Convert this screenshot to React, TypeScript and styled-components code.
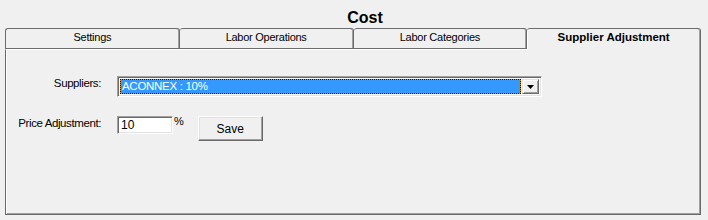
import React from 'react';
import styled, { createGlobalStyle } from 'styled-components';

const tabs = ['Settings', 'Labor Operations', 'Labor Categories', 'Supplier Adjustment'];
const activeTab = 'Supplier Adjustment';

const App = () => {
  return (
    <>
      <GlobalStyle />
      <Window>
        <Title>Cost</Title>
        <TabStrip>
          {tabs.map(tab => (
            <Tab key={tab} $active={tab === activeTab}>
              {tab}
            </Tab>
          ))}
        </TabStrip>
        <Panel>
          <Form>
            <Label>Suppliers:</Label>
            <Combo>
              <ComboField>ACONNEX : 10%</ComboField>
              <DropButton>
                <svg width="7" height="4" viewBox="0 0 7 4">
                  <path d="M0 0h7L3.5 4z" fill="#000" />
                </svg>
              </DropButton>
            </Combo>
            <Label>Price Adjustment:</Label>
            <PriceRow>
              <PriceInput defaultValue="10" />
              <Percent>%</Percent>
              <Button>Save</Button>
            </PriceRow>
          </Form>
        </Panel>
      </Window>
    </>
  );
};

const GlobalStyle = createGlobalStyle`
  html, body {
    margin: 0;
    padding: 0;
    background: #f0f0f0;
  }
  body {
    font-family: "Liberation Sans", Arial, sans-serif;
    color: #000;
  }
`;

const Window = styled.div`
  width: 708px;
  height: 220px;
  box-sizing: border-box;
  padding: 0 7px 0 5px;
  background: #f0f0f0;
  overflow: hidden;
`;

const Title = styled.div`
  height: 28px;
  box-sizing: border-box;
  padding: 9px 0 0 24px;
  text-align: center;
  font-size: 16px;
  line-height: 18px;
  font-weight: bold;
`;

const TabStrip = styled.div`
  display: flex;
  height: 21px;
  align-items: flex-start;
`;

const Tab = styled.div<{ $active: boolean }>`
  position: relative;
  z-index: ${({ $active }) => ($active ? 1 : 0)};
  flex: 1;
  box-sizing: border-box;
  height: ${({ $active }) => ($active ? '22px' : '21px')};
  margin-bottom: ${({ $active }) => ($active ? '-1px' : '0')};
  display: flex;
  justify-content: center;
  padding-top: 2px;
  background: #f0f0f0;
  border-top: 1px solid #6d6d6d;
  border-right: 1px solid #696969;
  border-bottom: ${({ $active }) => ($active ? 'none' : '1px solid #6d6d6d')};
  border-top-left-radius: 3px;
  border-top-right-radius: 3px;
  box-shadow: ${({ $active }) =>
    $active ? 'inset 1px 0 #fff, inset -1px 0 #a0a0a0' : 'inset -1px 0 #a0a0a0'};
  font-size: ${({ $active }) => ($active ? '11.5px' : '11px')};
  font-weight: ${({ $active }) => ($active ? 'bold' : 'normal')};
  letter-spacing: ${({ $active }) => ($active ? '0' : '-0.25px')};
  line-height: 13px;

  &:first-child {
    border-left: 1px solid #6d6d6d;
  }
`;

const Panel = styled.div`
  height: 166px;
  box-sizing: border-box;
  border-top: 1px solid #fff;
  border-left: 1px solid #696969;
  border-right: 1px solid #696969;
  border-bottom: 1px solid #696969;
  box-shadow: inset 1px 0 #fff, inset -1px 0 #a0a0a0, inset 0 -1px #a0a0a0;
`;

const Form = styled.div`
  display: grid;
  grid-template-columns: 95px auto;
  column-gap: 16px;
  row-gap: 19px;
  align-items: start;
  padding-top: 26px;
`;

const Label = styled.div`
  text-align: right;
  font-size: 11.5px;
  line-height: 14px;
  letter-spacing: -0.4px;
`;

const Combo = styled.div`
  width: 425px;
  height: 21px;
  box-sizing: border-box;
  display: flex;
  gap: 1px;
  padding: 2px;
  background: #fff;
  border: 1px solid;
  border-color: #a0a0a0 #fff #fff #a0a0a0;
  box-shadow: inset 1px 1px #696969, inset -1px -1px #e3e3e3;
`;

const ComboField = styled.div`
  flex: 1;
  box-sizing: border-box;
  border: 1px dotted #111;
  background: linear-gradient(#3399ff, #3399ff) padding-box, #d68b2c;
  color: #fff;
  font-size: 11.5px;
  line-height: 13px;
  letter-spacing: -0.3px;
  padding-left: 1px;
`;

const DropButton = styled.div`
  width: 17px;
  box-sizing: border-box;
  display: flex;
  align-items: center;
  justify-content: center;
  background: #f0f0f0;
  border: 1px solid;
  border-color: #e3e3e3 #696969 #696969 #e3e3e3;
  box-shadow: inset 1px 1px #fff, inset -1px -1px #a0a0a0;
`;

const PriceRow = styled.div`
  display: flex;
  align-items: flex-start;
`;

const PriceInput = styled.input`
  width: 56px;
  height: 18px;
  box-sizing: border-box;
  margin: 0;
  padding: 0 0 0 3px;
  background: #fff;
  border: 1px solid;
  border-color: #a0a0a0 #fff #fff #a0a0a0;
  box-shadow: inset 1px 1px #696969, inset -1px -1px #e3e3e3;
  font-family: "Liberation Sans", Arial, sans-serif;
  font-size: 12px;
  color: #000;
  outline: none;
`;

const Percent = styled.span`
  margin: 0 14px 0 1px;
  font-size: 11px;
  line-height: 11px;
`;

const Button = styled.button`
  width: 65px;
  height: 25px;
  box-sizing: border-box;
  margin: 0;
  padding: 0;
  background: #f0f0f0;
  border: 1px solid;
  border-color: #fff #696969 #696969 #fff;
  box-shadow: inset -1px -1px #a0a0a0, inset 1px 1px #e3e3e3;
  font-family: "Liberation Sans", Arial, sans-serif;
  font-size: 12px;
  color: #000;
`;

export default App;
